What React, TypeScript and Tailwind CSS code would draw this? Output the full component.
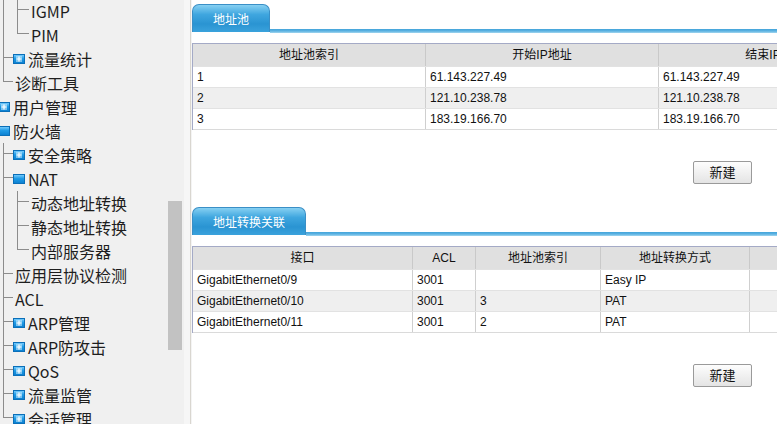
import React from "react";

type Conn = "none" | "line" | "tee" | "elbow";

const LINE = "#8c8c8c";

function ConnCell({ kind, lineLeft, width }: { kind: Conn; lineLeft: number; width: number }) {
  return (
    <div className="relative h-full shrink-0" style={{ width }}>
      {(kind === "line" || kind === "tee") && (
        <div className="absolute top-0 bottom-0 w-px bg-[#8c8c8c]" style={{ left: lineLeft }} />
      )}
      {kind === "elbow" && (
        <div className="absolute top-0 h-[11px] w-px bg-[#8c8c8c]" style={{ left: lineLeft }} />
      )}
      {(kind === "tee" || kind === "elbow") && (
        <div className="absolute top-[10px] h-px bg-[#8c8c8c]" style={{ left: lineLeft, right: 0 }} />
      )}
    </div>
  );
}

function FolderIcon({ plus }: { plus: boolean }) {
  return (
    <svg width="12" height="10" viewBox="0 0 12 10" className="shrink-0">
      <defs>
        <linearGradient id={plus ? "fgp" : "fgo"} x1="0" y1="0" x2="0" y2="1">
          <stop offset="0" stopColor="#7fd0ff" />
          <stop offset="0.45" stopColor="#1f9be6" />
          <stop offset="1" stopColor="#0a7fd0" />
        </linearGradient>
      </defs>
      <rect x="0.5" y="0.5" width="11" height="9" fill={`url(#${plus ? "fgp" : "fgo"})`} stroke="#0b6fb8" />
      {plus && (
        <>
          <rect x="3" y="2" width="6" height="6" fill="#cfeeff" opacity="0.55" />
          <path d="M6 2.5v5M3.5 5h5" stroke="#ffffff" strokeWidth="1.2" />
        </>
      )}
    </svg>
  );
}

type Item = {
  label: string;
  cells: { kind: Conn; lineLeft: number; width: number }[];
  icon?: "plus" | "open";
  root?: boolean;
};

const L0 = (k: Conn) => ({ kind: k, lineLeft: 3, width: 13 });
const L0w = (k: Conn) => ({ kind: k, lineLeft: 3, width: 14 });
const L1 = (k: Conn) => ({ kind: k, lineLeft: 3, width: 15 });

const items: Item[] = [
  { label: "IGMP", cells: [L0w("line"), L1("tee")] },
  { label: "PIM", cells: [L0w("line"), L1("elbow")] },
  { label: "流量统计", cells: [L0("tee")], icon: "plus" },
  { label: "诊断工具", cells: [L0("elbow")] },
  { label: "用户管理", cells: [], icon: "plus", root: true },
  { label: "防火墙", cells: [], icon: "open", root: true },
  { label: "安全策略", cells: [L0("tee")], icon: "plus" },
  { label: "NAT", cells: [L0("tee")], icon: "open" },
  { label: "动态地址转换", cells: [L0w("line"), L1("tee")] },
  { label: "静态地址转换", cells: [L0w("line"), L1("tee")] },
  { label: "内部服务器", cells: [L0w("line"), L1("elbow")] },
  { label: "应用层协议检测", cells: [L0("tee")] },
  { label: "ACL", cells: [L0("tee")] },
  { label: "ARP管理", cells: [L0("tee")], icon: "plus" },
  { label: "ARP防攻击", cells: [L0("tee")], icon: "plus" },
  { label: "QoS", cells: [L0("tee")], icon: "plus" },
  { label: "流量监管", cells: [L0("tee")], icon: "plus" },
  { label: "会话管理", cells: [L0("elbow")], icon: "plus" },
];

function TreeRow({ item }: { item: Item }) {
  return (
    <div className="flex h-[24px] shrink-0 items-stretch">
      {item.cells.map((c, i) => (
        <ConnCell key={i} {...c} />
      ))}
      {item.icon && (
        <div className={`flex items-center ${item.root ? "-ml-[2px]" : ""}`}>
          <FolderIcon plus={item.icon === "plus"} />
        </div>
      )}
      <div
        className={`flex items-center whitespace-nowrap text-[16px] leading-none text-[#1e1e1e] ${
          item.icon ? "pl-[3px]" : "pl-[2px]"
        }`}
      >
        {item.label}
      </div>
    </div>
  );
}

function Tab({ label }: { label: string }) {
  return (
    <div className="flex h-[29px] items-end">
      <div className="flex h-[28px] shrink-0 items-center rounded-t-[7px] border border-b-0 border-[#3a8fc6] bg-[linear-gradient(to_bottom,#86d0f2_0%,#3fa6df_35%,#2a94d2_70%,#3aa2dc_100%)] px-[20px] pt-[3px] text-[12px] text-white">
        {label}
      </div>
      <div className="mb-[-1px] h-[4px] flex-1 bg-[linear-gradient(to_bottom,#44a4da_0%,#5bb2e2_50%,#a2d6ef_100%)]" />
    </div>
  );
}

function Button() {
  return (
    <button className="flex h-[23px] w-[59px] items-center justify-center rounded-[2px] border border-[#9a9a9a] bg-[linear-gradient(to_bottom,#fdfdfd,#e4e4e4)] text-[13px] text-[#111]">
      新建
    </button>
  );
}

function DataTable({ cols, rows }: { cols: { label: string; w: number }[]; rows: string[][] }) {
  return (
    <div className="flex w-[820px] flex-col border-l border-[#a4aac6] text-[12px] text-[#111]">
      <div className="flex h-[23px] border-t border-[#a4aac6] bg-[#e0e0e0]">
        {cols.map((c, i) => (
          <div
            key={i}
            className="flex shrink-0 items-center justify-center border-r border-[#c9c9c9]"
            style={{ width: c.w }}
          >
            {c.label}
          </div>
        ))}
      </div>
      {rows.map((r, ri) => (
        <div
          key={ri}
          className={`flex h-[21px] border-t border-[#e2e2e2] ${ri % 2 === 1 ? "bg-[#efefef]" : "bg-white"}`}
        >
          {r.map((v, i) => (
            <div
              key={i}
              className="flex shrink-0 items-center border-r border-[#cfcfcf] pl-[4px]"
              style={{ width: cols[i].w }}
            >
              {v}
            </div>
          ))}
        </div>
      ))}
      <div className="h-px bg-[#dadada]" />
    </div>
  );
}

export default function App() {
  return (
    <div
      className="flex h-[424px] w-[777px] overflow-hidden bg-white"
      style={{ fontFamily: '"Liberation Sans", "Noto Sans CJK SC", sans-serif' }}
    >
      {/* Sidebar */}
      <div className="flex h-full w-[184px] shrink-0 bg-[#f0f0f0]">
        <div
          className="-mt-[1px] flex w-[167px] flex-col overflow-hidden"
          style={{ fontFamily: '"Noto Sans CJK SC", sans-serif' }}
        >
          {items.map((it, i) => (
            <TreeRow key={i} item={it} />
          ))}
        </div>
        <div className="flex w-[17px] flex-col pt-[201px]">
          <div className="ml-[1px] h-[149px] w-[14px] bg-[#c2c2c2]" />
        </div>
      </div>
      {/* Separator */}
      <div className="h-full w-[6px] shrink-0 bg-[#f6f6f6]" />
      <div className="h-full w-px shrink-0 bg-[#d9d6d0]" />
      <div className="h-full w-px shrink-0 bg-[#f4f4f4]" />
      {/* Main */}
      <div className="flex min-w-0 flex-1 flex-col overflow-hidden pt-[3px]">
        <Tab label="地址池" />
        <div className="pt-[11px]">
          <DataTable
            cols={[
              { label: "地址池索引", w: 233 },
              { label: "开始IP地址", w: 233 },
              { label: "结束IP地址", w: 233 },
            ]}
            rows={[
              ["1", "61.143.227.49", "61.143.227.49"],
              ["2", "121.10.238.78", "121.10.238.78"],
              ["3", "183.19.166.70", "183.19.166.70"],
            ]}
          />
        </div>
        <div className="flex justify-end pr-[25px] pt-[31px]">
          <Button />
        </div>
        <div className="pt-[22px]">
          <Tab label="地址转换关联" />
        </div>
        <div className="pt-[11px]">
          <DataTable
            cols={[
              { label: "接口", w: 220 },
              { label: "ACL", w: 63 },
              { label: "地址池索引", w: 125 },
              { label: "地址转换方式", w: 149 },
              { label: "操作", w: 120 },
            ]}
            rows={[
              ["GigabitEthernet0/9", "3001", "", "Easy IP", ""],
              ["GigabitEthernet0/10", "3001", "3", "PAT", ""],
              ["GigabitEthernet0/11", "3001", "2", "PAT", ""],
            ]}
          />
        </div>
        <div className="flex justify-end pr-[25px] pt-[31px]">
          <Button />
        </div>
      </div>
    </div>
  );
}
